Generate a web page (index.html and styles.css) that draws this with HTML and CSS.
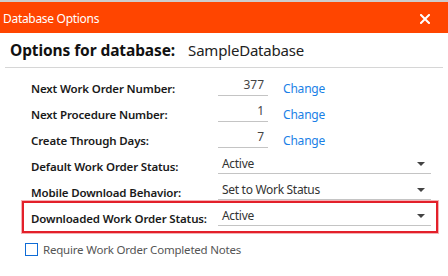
FILE: index.html
```html
<!DOCTYPE html>
<html>
<head>
<meta charset="utf-8">
<link rel="stylesheet" href="styles.css">
</head>
<body>
<div class="window">
  <div class="topstrip"></div>
  <div class="titlebar">
    <span class="title">Database Options</span>
    <svg class="close" width="10" height="10" viewBox="0 0 10 10"><path d="M1 1 L9 9 M9 1 L1 9" stroke="#fff" stroke-width="2" stroke-linecap="square"/></svg>
  </div>
  <div class="header">
    <span class="hlabel">Options for database:</span>
    <span class="hvalue">SampleDatabase</span>
  </div>
  <div class="sep"></div>
  <div class="form">
    <div class="row">
      <span class="label">Next Work Order Number:</span>
      <div class="ctl"><span class="num">377</span><a class="link">Change</a></div>
    </div>
    <div class="row">
      <span class="label">Next Procedure Number:</span>
      <div class="ctl"><span class="num">1</span><a class="link">Change</a></div>
    </div>
    <div class="row">
      <span class="label">Create Through Days:</span>
      <div class="ctl"><span class="num">7</span><a class="link">Change</a></div>
    </div>
    <div class="row">
      <span class="label">Default Work Order Status:</span>
      <div class="ctl"><span class="select">Active<i class="arrow"></i></span></div>
    </div>
    <div class="row">
      <span class="label">Mobile Download Behavior:</span>
      <div class="ctl"><span class="select">Set to Work Status<i class="arrow"></i></span></div>
    </div>
    <div class="row highlight">
      <span class="label">Downloaded Work Order Status:</span>
      <div class="ctl"><span class="select">Active<i class="arrow"></i></span></div>
      <div class="redbox"></div>
    </div>
    <div class="check">
      <span class="box"></span>
      <span class="ctext">Require Work Order Completed Notes</span>
    </div>
  </div>
</div>
</body>
</html>
```
FILE: styles.css
```css
html, body {
  margin: 0;
  padding: 0;
  background: #ffffff;
}
body {
  width: 448px;
  height: 276px;
  overflow: hidden;
  font-family: "Noto Sans", "Open Sans", sans-serif;
}
.topstrip {
  height: 2px;
  background: #cdcdcd;
}
.titlebar {
  height: 31px;
  background: #ff4500;
  display: flex;
  align-items: center;
  justify-content: space-between;
  padding: 0 18px 0 3px;
}
.title {
  color: #ffffff;
  font-size: 12px;
  letter-spacing: -0.3px;
  margin-top: 1px;
}
.close {
  display: block;
  margin-top: 2px;
}
.header {
  height: 34px;
  display: flex;
  align-items: center;
  padding-left: 10px;
  color: #111;
}
.hlabel {
  font-weight: 700;
  font-size: 15.5px;
  letter-spacing: -0.1px;
}
.hvalue {
  font-size: 15px;
  margin-left: 13px;
  letter-spacing: -0.2px;
  color: #222;
}
.sep {
  height: 1px;
  background: #d6d6d6;
  margin: 0 5px;
}
.form {
  padding-top: 2px;
  display: flex;
  flex-direction: column;
}
.row {
  position: relative;
  height: 26px;
  display: grid;
  grid-template-columns: 187px 1fr;
  padding-left: 31px;
  align-items: end;
}
.label {
  font-size: 11.5px;
  font-weight: 600;
  color: #1a1a1a;
  line-height: 16px;
  margin-bottom: -1px;
  letter-spacing: -0.15px;
}
.ctl {
  display: flex;
  align-items: flex-end;
}
.num {
  width: 50px;
  box-sizing: border-box;
  text-align: right;
  padding-right: 4px;
  border-bottom: 1px solid #c4c4c4;
  font-size: 12px;
  line-height: 16px;
  padding-bottom: 2px;
  color: #444;
}
.link {
  margin-left: 15px;
  color: #1a7fe6;
  font-size: 12px;
  letter-spacing: -0.2px;
  line-height: 16px;
  margin-bottom: -1px;
}
.select {
  position: relative;
  width: 213px;
  box-sizing: border-box;
  padding-left: 4px;
  border-bottom: 1px solid #c4c4c4;
  font-size: 12px;
  letter-spacing: -0.3px;
  line-height: 16px;
  padding-bottom: 1px;
  color: #333;
}
.arrow {
  position: absolute;
  right: 6px;
  top: 6px;
  width: 0;
  height: 0;
  border-left: 4px solid transparent;
  border-right: 4px solid transparent;
  border-top: 4px solid #444;
}
.redbox {
  position: absolute;
  left: 22px;
  top: 1px;
  width: 416px;
  height: 32px;
  box-sizing: border-box;
  border: 2px solid #e3202a;
  box-shadow: 0 0 0 1px rgba(227, 32, 42, 0.35);
  pointer-events: none;
}
.check {
  display: flex;
  align-items: center;
  padding-left: 25px;
  margin-top: 16px;
}
.box {
  width: 13px;
  height: 13px;
  box-sizing: border-box;
  border: 1px solid #0f6cd6;
  background: #fff;
}
.ctext {
  margin-left: 5px;
  font-size: 11.5px;
  color: #555;
  letter-spacing: -0.2px;
}
```
